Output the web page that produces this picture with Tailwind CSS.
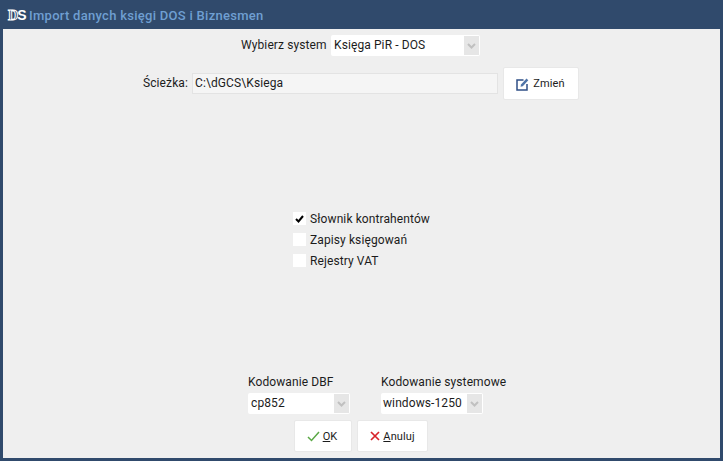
<!DOCTYPE html>
<html lang="pl">
<head>
  <meta charset="UTF-8" />
  <title>Import danych księgi DOS i Biznesmen</title>
  <script src="https://cdn.jsdelivr.net/npm/@tailwindcss/browser@4"></script>
</head>
<body class="w-[723px] h-[461px] overflow-hidden bg-[#304a6c] font-['Roboto',sans-serif] text-[12px] tracking-[0.1px] leading-[15px] text-[#1c1c1c]">
  <div class="flex flex-col h-full px-[3px] pb-[3px]">
    <!-- title bar -->
    <div class="h-[29px] shrink-0 flex items-center pl-[5px] pt-[2px]">
      <span class="w-[21px] flex items-center text-white font-bold text-[14px] leading-[15px]">
        <span class="font-['Liberation_Serif',serif] text-transparent [-webkit-text-stroke:1px_#fff] tracking-normal">D</span>
        <span class="font-['Liberation_Sans',sans-serif] tracking-normal -ml-[1px]">S</span>
      </span>
      <span class="font-medium text-[13px] tracking-[0.28px] text-[#6f9fd2]">Import danych księgi DOS i Biznesmen</span>
    </div>

    <!-- body -->
    <div class="flex-1 flex flex-col bg-[#efefef]">
      <div class="flex items-center h-[21px] mt-[6px] pl-[238px]">
        <span class="w-[85px] whitespace-nowrap">Wybierz system</span>
        <div class="ml-[5px] w-[149px] h-[21px] bg-white rounded-[2px] flex items-center justify-between pl-[3px] pr-[1px]">
          <span>Księga PiR - DOS</span>
          <span class="w-[15px] h-[19px] bg-[#e6e6e6] flex items-center justify-center">
            <svg width="9" height="6" viewBox="0 0 9 6" fill="none" stroke="#c0c0c0" stroke-width="2"><path d="M1 1l3.500 3.500L8 1" /></svg>
          </span>
        </div>
      </div>

      <div class="flex items-center h-[33px] mt-[11px] pl-[140px]">
        <span class="w-[45px]">Ścieżka:</span>
        <div class="ml-[4px] w-[306px] h-[21px] bg-[#f5f5f5] border border-[#e3e3e3] flex items-center pl-[2px]">C:\dGCS\Ksiega</div>
        <button class="ml-[5px] w-[76px] h-[33px] bg-white rounded-[2px] border border-[#e8e8e8] flex items-center justify-center gap-[4px] pr-[1px] text-[11px]">
          <svg width="13" height="14" viewBox="0 0 13 14" fill="none">
            <path d="M7.500 3H1v10h10V7" stroke="#2f4f86" stroke-width="1.500" />
            <path d="M4.500 9.800l.5-2.300L10.500 1.500l1.800 1.800L6.800 9.300z" fill="#4f74a8" />
          </svg>
          <span>Zmień</span>
        </button>
      </div>

      <div class="flex flex-col gap-[8px] mt-[112px] pl-[290px]">
        <label class="flex items-center h-[13px] gap-[4px]">
          <span class="w-[13px] h-[13px] bg-white flex items-center justify-center">
            <svg width="9" height="8" viewBox="0 0 9 8" fill="none" stroke="#000" stroke-width="2"><path d="M1 4l2.500 2.500L8 1" /></svg>
          </span>
          <span class="pt-[1px]">Słownik kontrahentów</span>
        </label>
        <label class="flex items-center h-[13px] gap-[4px]">
          <span class="w-[13px] h-[13px] bg-white"></span>
          <span class="pt-[1px]">Zapisy księgowań</span>
        </label>
        <label class="flex items-center h-[13px] gap-[4px]">
          <span class="w-[13px] h-[13px] bg-white"></span>
          <span class="pt-[1px]">Rejestry VAT</span>
        </label>
      </div>

      <div class="flex mt-[108px] pl-[245px]">
        <div class="w-[133px]">
          <div class="h-[18px]">Kodowanie DBF</div>
          <div class="w-[102px] h-[21px] bg-white rounded-[2px] flex items-center justify-between pl-[3px] pr-[1px]">
            <span>cp852</span>
            <span class="w-[15px] h-[19px] bg-[#e6e6e6] flex items-center justify-center">
              <svg width="9" height="6" viewBox="0 0 9 6" fill="none" stroke="#c0c0c0" stroke-width="2"><path d="M1 1l3.500 3.500L8 1" /></svg>
            </span>
          </div>
        </div>
        <div>
          <div class="h-[18px]">Kodowanie systemowe</div>
          <div class="w-[102px] h-[21px] bg-white rounded-[2px] flex items-center justify-between pl-[2px] pr-[1px]">
            <span class="whitespace-nowrap">windows-1250</span>
            <span class="w-[15px] h-[19px] bg-[#e6e6e6] flex items-center justify-center">
              <svg width="9" height="6" viewBox="0 0 9 6" fill="none" stroke="#c0c0c0" stroke-width="2"><path d="M1 1l3.500 3.500L8 1" /></svg>
            </span>
          </div>
        </div>
      </div>

      <div class="flex gap-[5px] mt-[6px] pl-[291px]">
        <button class="w-[58px] h-[32px] bg-white rounded-[2px] border border-[#e8e8e8] flex items-center justify-center gap-[3px] pr-[2px] text-[11px]">
          <svg width="13" height="11" viewBox="0 0 13 11" fill="none" stroke="#5aa845" stroke-width="1.500"><path d="M1 6l3.500 3.500L12 1" /></svg>
          <span><span class="underline">O</span>K</span>
        </button>
        <button class="w-[71px] h-[32px] bg-white rounded-[2px] border border-[#e8e8e8] flex items-center justify-center gap-[3px] text-[11px]">
          <svg width="10" height="10" viewBox="0 0 10 10" fill="none" stroke="#d8232a" stroke-width="1.700"><path d="M1 1l8 8M9 1l-8 8" /></svg>
          <span><span class="underline">A</span>nuluj</span>
        </button>
      </div>
    </div>
  </div>
</body>
</html>
